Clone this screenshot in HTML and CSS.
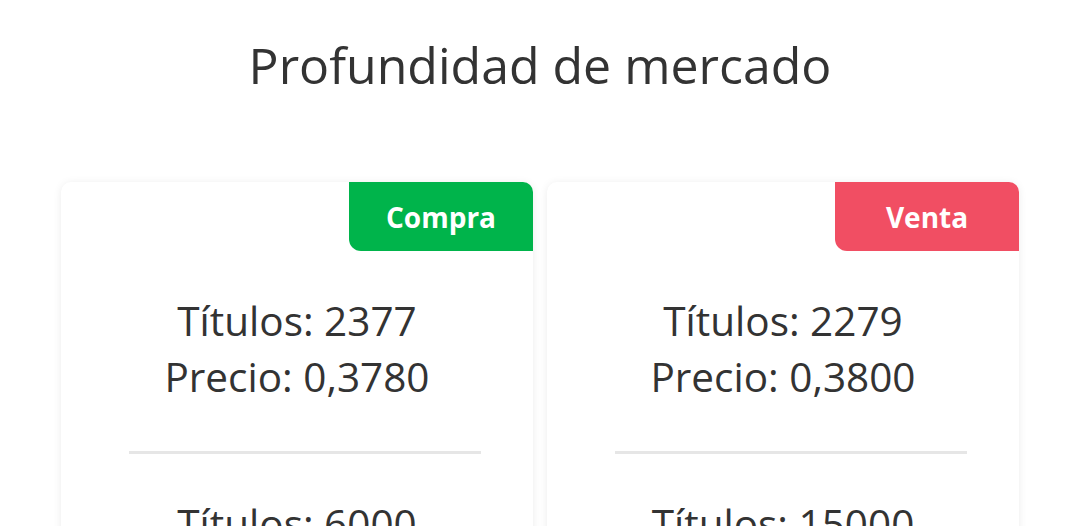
FILE: index.html
```html
<!DOCTYPE html>
<html lang="es">
<head>
<meta charset="utf-8">
<title>Profundidad de mercado</title>
<link rel="stylesheet" href="styles.css">
</head>
<body>
<main class="page">
  <h1 class="title">Profundidad de mercado</h1>
  <section class="book">
    <article class="side">
      <div class="tag tag-buy">Compra</div>
      <div class="level">
        <p>Títulos: 2377</p>
        <p>Precio: 0,3780</p>
      </div>
      <hr class="rule">
      <div class="level">
        <p>Títulos: 6000</p>
        <p>Precio: 0,3760</p>
      </div>
    </article>
    <article class="side">
      <div class="tag tag-sell">Venta</div>
      <div class="level">
        <p>Títulos: 2279</p>
        <p>Precio: 0,3800</p>
      </div>
      <hr class="rule">
      <div class="level">
        <p>Títulos: 15000</p>
        <p>Precio: 0,3820</p>
      </div>
    </article>
  </section>
</main>
</body>
</html>
```
FILE: styles.css
```css
html, body {
  margin: 0;
  padding: 0;
  background: #ffffff;
}

body {
  font-family: "Open Sans", "Noto Sans", sans-serif;
  color: #333333;
  overflow: hidden;
  height: 526px;
}

.page {
  display: flex;
  flex-direction: column;
  align-items: center;
}

.title {
  margin: 29px 0 0;
  font-size: 50px;
  font-weight: 400;
  line-height: 72px;
  color: #333333;
}

.book {
  display: grid;
  grid-template-columns: 472px 472px;
  gap: 14px;
  margin-top: 81px;
}

.side {
  display: flex;
  flex-direction: column;
  background: #ffffff;
  border-radius: 10px;
  box-shadow: 0 1px 8px rgba(0, 0, 0, 0.08);
  padding-bottom: 40px;
}

.tag {
  align-self: flex-end;
  width: 184px;
  height: 69px;
  display: flex;
  align-items: center;
  justify-content: center;
  color: #ffffff;
  font-size: 28px;
  font-weight: 700;
  border-radius: 0 10px 0 12px;
}

.tag-buy { background: #00b44b; }
.tag-sell { background: #f14e63; }

.level {
  text-align: center;
  font-size: 40.5px;
  line-height: 56px;
  padding: 42px 0 0;
}

.level p {
  margin: 0;
}

.rule {
  width: 352px;
  margin: 46px 0 0 68px;
  border: 0;
  height: 3px;
  background: #e6e6e6;
}
```
